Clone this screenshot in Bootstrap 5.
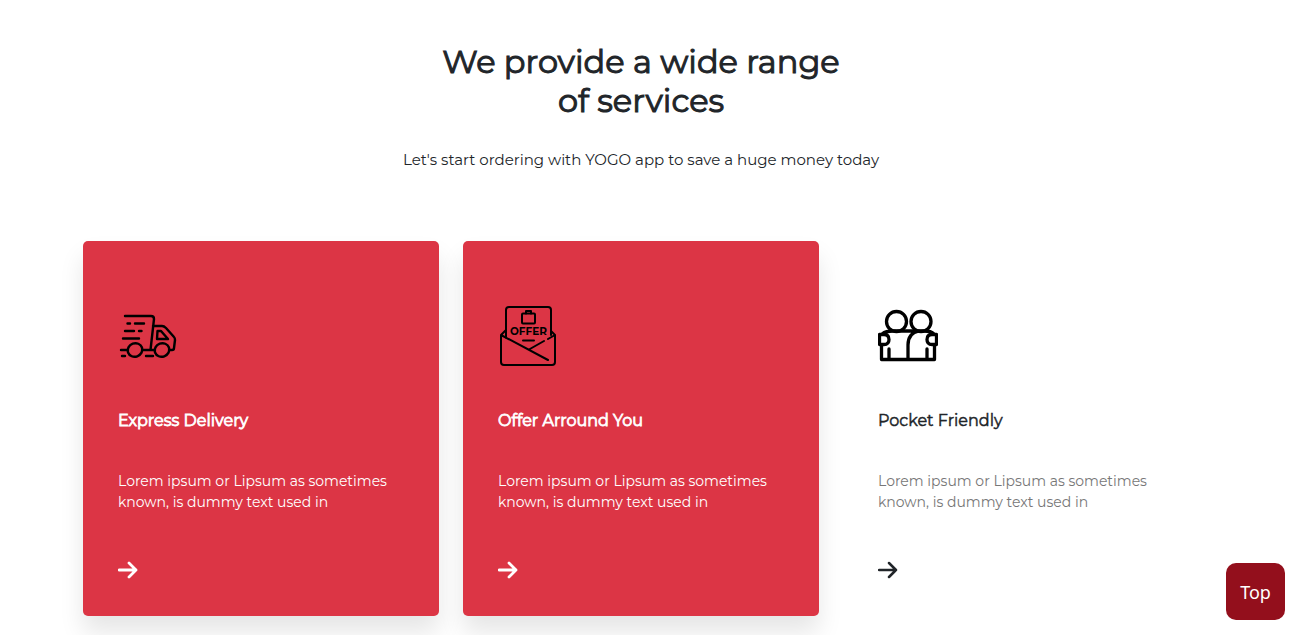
<!DOCTYPE html>
<html lang="en">
<head>
<meta charset="utf-8">
<meta name="viewport" content="width=device-width, initial-scale=1">
<title>YOGO services</title>
<link rel="stylesheet" href="https://cdn.jsdelivr.net/npm/bootstrap@5.3.0/dist/css/bootstrap.min.css">
<style>
  body { font-family: Montserrat, Inter, "Open Sans", sans-serif; }
  .services { padding: 42px 24px 0 0; min-height: 100vh; overflow: hidden; }
  .services-title { font-size: 32px; line-height: 39px; font-weight: 400; margin-bottom: 28px; -webkit-text-stroke: 1px currentColor; }
  .services-lead { font-size: 15px; line-height: 24px; font-weight: 400; margin-bottom: 69px; }
  .service-card { padding: 65px 35px 35px; border: 0; border-radius: 5px; background: transparent; }
  .service-card.featured { background: #dc3545; color: #fff; box-shadow: 0 16px 24px rgba(0, 0, 0, .1); }
  .service-icon { width: 60px; height: 60px; margin-bottom: 44px; color: #000; }
  .service-name { font-size: 16px; line-height: 22px; font-weight: 400; margin-bottom: 39px; -webkit-text-stroke: .03em currentColor; }
  .featured .service-name { -webkit-text-stroke-width: .05em; }
  .service-text { font-size: 14px; line-height: 21px; font-weight: 400; margin-bottom: 46px; color: #777; }
  .featured .service-text { color: #fff; }
  .service-link { color: #212529; line-height: 0; width: 20px; }
  .featured .service-link { color: #fff; }
  .to-top { right: 21px; bottom: 15px; width: 59px; height: 57px; border: 0; border-radius: 10px; background: #930f1c; color: #fff; font: 18px/24px "Noto Sans", "Open Sans", sans-serif; }
</style>
</head>
<body>
<main class="services">
  <div class="container-xl">
    <header class="text-center">
      <h2 class="services-title">We provide a wide range<br>of services</h2>
      <p class="services-lead">Let's start ordering with YOGO app to save a huge money today</p>
    </header>
    <div class="row g-4">
      <div class="col-md-4">
        <article class="card service-card featured h-100">
          <svg class="service-icon" viewBox="0 0 60 60" fill="none" stroke="currentColor" stroke-width="2.400" stroke-linecap="round" stroke-linejoin="round" aria-hidden="true">
            <path d="M7 10H33Q36 10 36 13L32.500 44M35 20H44Q46 20 48 22L56 31Q57 32 57 34L56 42Q56 44 54 44H51M24 44H37M9.500 17.500H12M17 17.500H26M7 25H16M21 25H23.500M5 32.500H21M3 44H10M4 50H7M28 50H35"/>
            <path d="M39.500 25H43L50 33H39Z"/>
            <ellipse cx="17" cy="44" rx="7.400" ry="6.700" transform="rotate(-20 17 44)"/>
            <ellipse cx="44" cy="44" rx="7.400" ry="6.700" transform="rotate(-20 44 44)"/>
          </svg>
          <h3 class="service-name">Express Delivery</h3>
          <p class="service-text">Lorem ipsum or Lipsum as sometimes known, is dummy text used in</p>
          <a class="service-link" href="#delivery" aria-label="Express Delivery"><svg width="20" height="22" viewBox="0 0 20 22" fill="none" stroke="currentColor" stroke-width="2.800" stroke-linecap="round" stroke-linejoin="round"><path d="M1 11H18M11 4L18 11L11 18"/></svg></a>
        </article>
      </div>
      <div class="col-md-4">
        <article class="card service-card featured h-100">
          <svg class="service-icon" viewBox="0 0 60 60" fill="none" stroke="currentColor" stroke-width="2" stroke-linecap="round" stroke-linejoin="round" aria-hidden="true">
            <path d="M8 32V4Q8 1 11 1H50Q53 1 53 4V29M8 24L3 29V56Q3 59 6 59H54Q57 59 57 56V29L53 25M3 29L50 54M57 29L50 33M46 35L31 43.500M25 34.500H36"/>
            <rect x="24" y="7.500" width="13" height="10" rx="1"/><path d="M28 7.500V5H33V7.500"/>
            <text x="30.500" y="29" text-anchor="middle" font-family="Montserrat, Lato, sans-serif" font-weight="700" font-size="10.500" fill="currentColor" stroke="none">OFFER</text>
          </svg>
          <h3 class="service-name">Offer Arround You</h3>
          <p class="service-text">Lorem ipsum or Lipsum as sometimes known, is dummy text used in</p>
          <a class="service-link" href="#offers" aria-label="Offer Arround You"><svg width="20" height="22" viewBox="0 0 20 22" fill="none" stroke="currentColor" stroke-width="2.800" stroke-linecap="round" stroke-linejoin="round"><path d="M1 11H18M11 4L18 11L11 18"/></svg></a>
        </article>
      </div>
      <div class="col-md-4">
        <article class="card service-card h-100">
          <svg class="service-icon" viewBox="0 0 60 60" fill="none" stroke="currentColor" stroke-width="3.300" stroke-linecap="round" stroke-linejoin="round" aria-hidden="true">
            <circle cx="18.500" cy="15.500" r="10"/><circle cx="43" cy="15.500" r="10"/>
            <path d="M1.500 28.500H6Q11 28.500 11 33.500T6 38.500H1.500ZM58.500 28.500H54Q49 28.500 49 33.500T54 38.500H58.500ZM4 28Q8 25 15 25H46Q53 25 56 28M3.500 39V53.500H56.500V39M11 43V53M49 43V53M30 53V39Q30 27 41 25"/>
          </svg>
          <h3 class="service-name">Pocket Friendly</h3>
          <p class="service-text">Lorem ipsum or Lipsum as sometimes known, is dummy text used in</p>
          <a class="service-link" href="#pocket" aria-label="Pocket Friendly"><svg width="20" height="22" viewBox="0 0 20 22" fill="none" stroke="currentColor" stroke-width="2.500" stroke-linecap="round" stroke-linejoin="round"><path d="M1 11H18M11 4L18 11L11 18"/></svg></a>
        </article>
      </div>
    </div>
  </div>
</main>
<button class="to-top position-fixed p-0" type="button">Top</button>
<script src="https://cdn.jsdelivr.net/npm/bootstrap@5.3.0/dist/js/bootstrap.bundle.min.js"></script>
</body>
</html>
